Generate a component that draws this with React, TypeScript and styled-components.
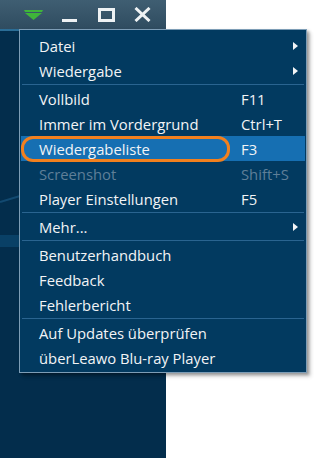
import React from "react";
import styled, { createGlobalStyle } from "styled-components";

const Global = createGlobalStyle`
  html, body { margin: 0; padding: 0; background: #ffffff; }
  body { width: 314px; height: 458px; overflow: hidden; font-family: "Open Sans", "Noto Sans", sans-serif; }
`;

const Page = styled.div`
  position: relative;
  width: 314px;
  height: 458px;
  display: flex;
  background: #ffffff;
`;

const PlayerPanel = styled.div`
  width: 166px;
  height: 458px;
  display: flex;
  flex-direction: column;
  background: #032d4c;
  position: relative;
`;

const TitleBar = styled.div`
  height: 29px;
  display: flex;
  align-items: center;
  padding-left: 24px;
  background: linear-gradient(#3f5e72, #2f4c60);
  border-bottom: 2px solid #2b6d96;
`;

const TitleButton = styled.div<{ $w: number }>`
  width: ${(p) => p.$w}px;
  height: 29px;
  display: flex;
  align-items: center;
  justify-content: flex-start;
`;

const Backdrop = styled.svg`
  flex: 1;
  width: 166px;
`;

const Menu = styled.div`
  position: absolute;
  left: 19px;
  top: 29px;
  width: 286px;
  padding: 3px 0 2px 0;
  background: #023a60;
  border: 1px solid #7d9db6;
  box-shadow: 2px 2px 3px rgba(0, 0, 0, 0.35), 4px 4px 4px rgba(0, 0, 0, 0.12);
  display: flex;
  flex-direction: column;
`;

const Row = styled.div<{ $active?: boolean; $disabled?: boolean }>`
  position: relative;
  height: 25px;
  display: grid;
  grid-template-columns: 1fr 52px 12px;
  align-items: center;
  padding-left: 18px;
  margin: 0 1px;
  font-size: 14.8px;
  color: ${(p) => (p.$disabled ? "#5f7f98" : "#f2f4f6")};
  background: ${(p) => (p.$active ? "#166fb2" : "transparent")};
`;

const Label = styled.span`
  white-space: nowrap;
`;

const Shortcut = styled.span`
  white-space: nowrap;
`;

const Arrow = styled.span`
  display: flex;
  align-items: center;
`;

const SepWrap = styled.div`
  height: 3px;
  display: flex;
  align-items: center;
  padding: 0 2px;
`;

const SepLine = styled.div`
  flex: 1;
  height: 1px;
  background: #2a6490;
`;

const Ring = styled.div`
  position: absolute;
  left: 0px;
  top: 0px;
  width: 209px;
  height: 26px;
  box-sizing: border-box;
  border: 3px solid #f2801e;
  border-radius: 12px;
`;

type Item = { label: string; key?: string; sub?: boolean; active?: boolean; disabled?: boolean } | "sep";

const items: Item[] = [
  { label: "Datei", sub: true },
  { label: "Wiedergabe", sub: true },
  "sep",
  { label: "Vollbild", key: "F11" },
  { label: "Immer im Vordergrund", key: "Ctrl+T" },
  { label: "Wiedergabeliste", key: "F3", active: true },
  { label: "Screenshot", key: "Shift+S", disabled: true },
  { label: "Player Einstellungen", key: "F5" },
  "sep",
  { label: "Mehr...", sub: true },
  "sep",
  { label: "Benutzerhandbuch" },
  { label: "Feedback" },
  { label: "Fehlerbericht" },
  "sep",
  { label: "Auf Updates überprüfen" },
  { label: "überLeawo Blu-ray Player" },
];

const SubArrow = () => (
  <svg width="5" height="8" viewBox="0 0 5 8">
    <path d="M0 0 L5 4 L0 8 Z" fill="#f2f4f6" />
  </svg>
);

export default function App() {
  return (
    <Page>
      <Global />
      <PlayerPanel>
        <TitleBar>
          <TitleButton $w={38}>
            <svg width="19" height="10" viewBox="0 0 19 10">
              <path d="M0 0 H19 L18 2 H1 Z" fill="#3fb53a" />
              <path d="M1 3 H18 L9.5 10 Z" fill="#3fb53a" />
            </svg>
          </TitleButton>
          <TitleButton $w={36}>
            <svg width="16" height="12" viewBox="0 0 16 12" style={{ marginTop: 4 }}>
              <rect x="0" y="8" width="15" height="3" fill="#eef2f4" />
            </svg>
          </TitleButton>
          <TitleButton $w={36}>
            <svg width="17" height="14" viewBox="0 0 17 14">
              <rect x="1.5" y="1.5" width="14" height="11" fill="none" stroke="#eef2f4" strokeWidth="3" />
            </svg>
          </TitleButton>
          <TitleButton $w={20}>
            <svg width="17" height="15" viewBox="0 0 17 15">
              <path d="M1.5 1 L15.5 14 M15.5 1 L1.5 14" stroke="#eef2f4" strokeWidth="3" />
            </svg>
          </TitleButton>
        </TitleBar>
        <Backdrop viewBox="0 0 166 427" preserveAspectRatio="none">
          <path d="M0 171 Q10 168 20 165" stroke="#1c5c88" strokeWidth="2" fill="none" opacity="0.6" />
          <rect x="0" y="204" width="20" height="12" fill="#0d4c78" opacity="0.6" />
        </Backdrop>
      </PlayerPanel>
      <Menu>
        {items.map((it, i) =>
          it === "sep" ? (
            <SepWrap key={i}>
              <SepLine />
            </SepWrap>
          ) : (
            <Row key={i} $active={it.active} $disabled={it.disabled}>
              {it.active && <Ring />}
              <Label>{it.label}</Label>
              <Shortcut>{it.key ?? ""}</Shortcut>
              <Arrow>{it.sub ? <SubArrow /> : null}</Arrow>
            </Row>
          )
        )}
      </Menu>
    </Page>
  );
}
